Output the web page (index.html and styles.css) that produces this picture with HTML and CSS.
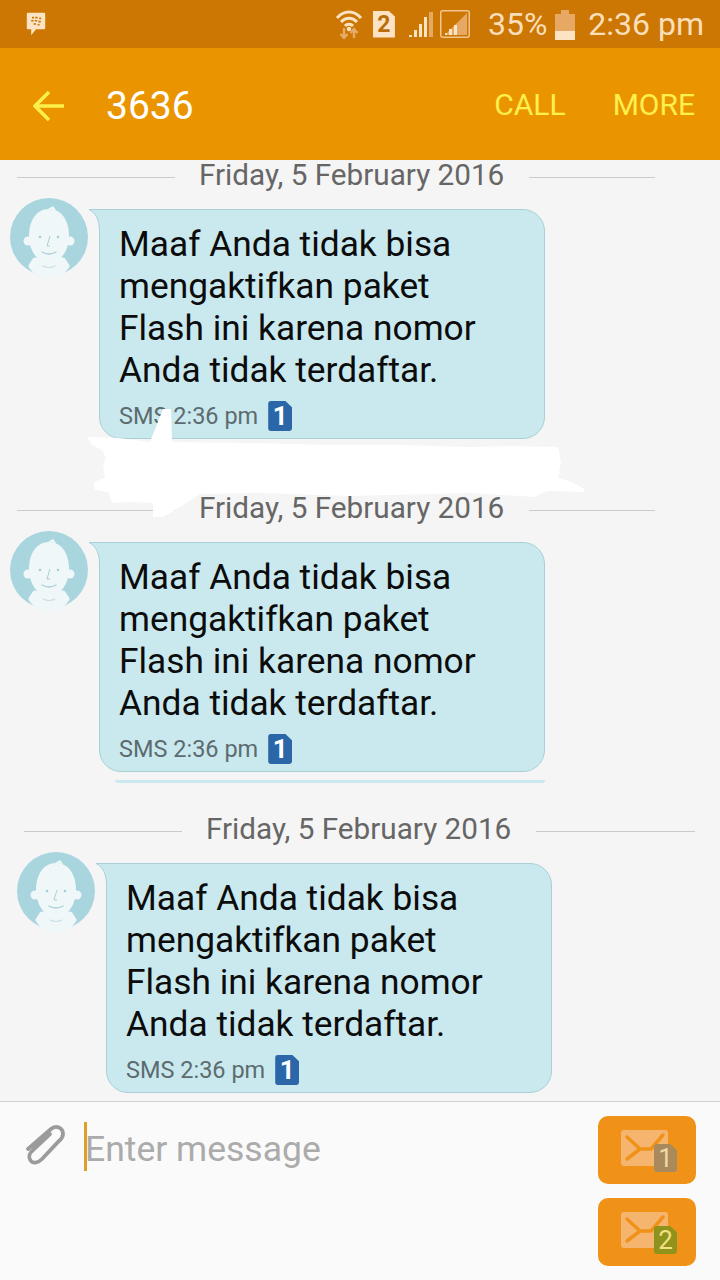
FILE: index.html
```html
<!DOCTYPE html>
<html lang="en">
<head>
<meta charset="utf-8">
<title>3636</title>
<link rel="stylesheet" href="styles.css">
</head>
<body>
<svg class="defs" width="0" height="0" aria-hidden="true">
  <defs>
    <symbol id="avatar" viewBox="0 0 78 80">
      <circle cx="39" cy="39" r="39" fill="#a9d5df"/>
      <path d="M25 62 L21 68 Q39 92 57 68 L53 62Z" fill="#f0f7f9" stroke="#f0f7f9" stroke-width="5" stroke-linejoin="round"/>
      <circle cx="18" cy="43" r="4.500" fill="#f0f7f9"/>
      <circle cx="60" cy="43" r="4.500" fill="#f0f7f9"/>
      <path d="M39 11 C27 11 19 22 19 38 C19 53 28 65 39 65 C50 65 59 53 59 38 C59 22 51 11 39 11Z" fill="#f0f7f9"/>
      <path d="M38 11 L43 8 L46 12Z" fill="#f0f7f9"/>
      <circle cx="30" cy="39" r="1.300" fill="#a9cfd6"/>
      <circle cx="48" cy="39" r="1.300" fill="#a9cfd6"/>
      <path d="M40 38 L37 48 L40 48" fill="none" stroke="#a9cfd6" stroke-width="1"/>
      <path d="M32 54 Q39 58 46 54" fill="none" stroke="#a9cfd6" stroke-width="1.300" stroke-linecap="round"/>
      <path d="M33 68 Q39 71 45 68" fill="none" stroke="#c6e1e6" stroke-width="1.200" stroke-linecap="round"/>
    </symbol>
    <symbol id="tail" viewBox="0 0 12 22">
      <path d="M0 .5 H12 V22 H10.500 C10.500 11 7 4 0 .5Z" fill="#c9e9ef"/>
      <path d="M0 .5 H12 M10.500 22 C10.500 11 7 4 0 .5" fill="none" stroke="#a9d0d6" stroke-width="1"/>
    </symbol>
    <symbol id="envelope" viewBox="0 0 47 36">
      <rect width="47" height="36" rx="3" fill="#f6b56f"/>
      <path d="M6 7 L19 19 L6 29 M19 19 H30 M42 5 L30 19" fill="none" stroke="#f09217" stroke-width="3.500" stroke-linecap="round" stroke-linejoin="round"/>
    </symbol>
  </defs>
</svg>

<div class="phone">
  <header class="status">
    <svg class="bb" viewBox="0 0 24 30" width="24" height="24">
      <path d="M2 1 H22 A1.500 1.500 0 0 1 23.500 2.500 V20 A1.500 1.500 0 0 1 22 21.500 H12 L6 29 V21.500 H2 A1.500 1.500 0 0 1 .5 20 V2.500 A1.500 1.500 0 0 1 2 1Z" fill="#fbe3c3"/>
      <path d="M7 6 h2.500 v2 h-2.500z M11 6 h3 v2 h-3z M16 7 h2.500 v2 h-2.500z M6 10 h3 v2 h-3z M10.500 10 h3 v2 h-3z M15 11 h3 v2 h-3z M9 14 h3 v2 h-3z M14 15 h2.500 v2 h-2.500z" fill="#c9780a"/>
    </svg>
    <div class="status-right">
      <svg class="wifi" viewBox="0 0 28 30" width="28" height="30">
        <path d="M2 9 C9 1 19 1 26 9 M6 13 C11 8 17 8 22 13 M10 17 C12 14.500 16 14.500 18 17" fill="none" stroke="#fbe3c3" stroke-width="3"/>
        <circle cx="14" cy="20" r="2.200" fill="#fbe3c3"/>
        <path d="M9 19 V28 M5.500 25 L9 29 L12.500 25 M19 29 V20 M15.500 24 L19 20 L22.500 24" fill="none" stroke="#e6ab68" stroke-width="2.400"/>
      </svg>
      <div class="sim-status">2</div>
      <svg class="signal" viewBox="0 0 26 26" width="26" height="26">
        <path d="M0 24 h3 v2 h-3z M5 19 h3 v7 h-3z M10 13 h3 v13 h-3z M15 6 h3 v20 h-3z" fill="#fbe3c3"/>
        <path d="M20 1 h4 v25 h-4z" fill="#e6a862"/>
      </svg>
      <svg class="signal-box" viewBox="0 0 30 28" width="30" height="28">
        <rect x=".75" y=".75" width="28.500" height="26.500" rx="2" fill="none" stroke="#f3c48c" stroke-width="1.500"/>
        <path d="M27 3 V25 H5Z" fill="#e6a862"/>
        <path d="M5 25 h2 v-2 h-2z M9 25 h3 v-6 h-3z M14 25 h3 v-10 h-3z" fill="#fbe3c3"/>
      </svg>
      <span class="status-text pct">35%</span>
      <div class="battery"><div class="battery-fill"></div></div>
      <span class="status-text time">2:36 pm</span>
    </div>
  </header>

  <nav class="toolbar">
    <svg class="back" viewBox="0 0 32 32" width="32" height="32">
      <path d="M31 16 H2 M16 2 L2 16 L16 30" fill="none" stroke="#fbf04a" stroke-width="3.500"/>
    </svg>
    <h1 class="title">3636</h1>
    <a class="action call">CALL</a>
    <a class="action">MORE</a>
  </nav>

  <main class="chat">
    <section class="group">
      <div class="date-row">
        <span class="rule rule-left"></span>
        <span class="date">Friday, 5 February 2016</span>
        <span class="rule rule-right"></span>
      </div>
      <div class="msg-row">
        <svg class="avatar"><use href="#avatar"/></svg>
        <article class="bubble">
          <svg class="bubble-tail"><use href="#tail"/></svg>
          <p class="msg-text">Maaf Anda tidak bisa<br>mengaktifkan paket<br>Flash ini karena nomor<br>Anda tidak terdaftar.</p>
          <div class="meta"><span>SMS 2:36 pm</span><span class="sim-tag">1</span></div>
        </article>
      </div>
    </section>

    <section class="group group-second">
      <div class="date-row">
        <span class="rule rule-left"></span>
        <span class="date">Friday, 5 February 2016</span>
        <span class="rule rule-right"></span>
      </div>
      <div class="msg-row">
        <svg class="avatar"><use href="#avatar"/></svg>
        <article class="bubble">
          <svg class="bubble-tail"><use href="#tail"/></svg>
          <p class="msg-text">Maaf Anda tidak bisa<br>mengaktifkan paket<br>Flash ini karena nomor<br>Anda tidak terdaftar.</p>
          <div class="meta"><span>SMS 2:36 pm</span><span class="sim-tag">1</span></div>
        </article>
      </div>
      <div class="sliver"></div>
    </section>

    <section class="group group-third">
      <div class="date-row">
        <span class="rule rule-left"></span>
        <span class="date">Friday, 5 February 2016</span>
        <span class="rule rule-right rule-long"></span>
      </div>
      <div class="msg-row">
        <svg class="avatar"><use href="#avatar"/></svg>
        <article class="bubble">
          <svg class="bubble-tail"><use href="#tail"/></svg>
          <p class="msg-text">Maaf Anda tidak bisa<br>mengaktifkan paket<br>Flash ini karena nomor<br>Anda tidak terdaftar.</p>
          <div class="meta"><span>SMS 2:36 pm</span><span class="sim-tag">1</span></div>
        </article>
      </div>
    </section>
  </main>

  <footer class="composer">
    <svg class="clip" viewBox="0 0 40 44" width="40" height="44">
      <path d="M3 26 L26 6 C31 1.500 38 5 38 11 C38 14 36.500 16 34 18 L17 36 C13 40 8 41 5.500 37.500 C3 34 4.500 30 8 27 L25 11" fill="none" stroke="#9b9b9b" stroke-width="3.800" stroke-linecap="round"/>
    </svg>
    <div class="input"><span class="caret"></span><span class="placeholder">Enter message</span></div>
    <div class="send-col">
      <button class="send">
        <svg class="env"><use href="#envelope"/></svg>
        <span class="send-tag tag-one">1</span>
      </button>
      <button class="send">
        <svg class="env"><use href="#envelope"/></svg>
        <span class="send-tag tag-two">2</span>
      </button>
    </div>
  </footer>

  <svg class="scribble" viewBox="0 0 720 1280" width="720" height="1280" aria-hidden="true">
    <path d="M87 437 L118 438 L150 442 L163 409 L171 409 L172 442 L250 443 L330 445 L400 445 L470 447 L510 446 L558 447 L561 462 L558 478 L572 482 L584 489 L584 492 L548 491 L540 494 L535 497 L470 493 L350 496 L260 493 L200 494 L185 504 L175 510 L163 517 L153 517 L153 503 L130 502 L112 503 L108 492 L95 490 L94 482 L105 478 L103 466 L106 458 L102 450 L92 445Z" fill="#fff"/>
  </svg>
</div>
</body>
</html>
```

FILE: styles.css
```css
* { box-sizing: border-box; }
html, body { margin: 0; padding: 0; }
body { font-family: Roboto, "Liberation Sans", sans-serif; background: #f5f5f5; }
.defs { position: absolute; }

.phone { position: relative; width: 720px; height: 1280px; overflow: hidden; display: flex; flex-direction: column; }

/* status bar */
.status { height: 48px; flex: none; background: #cc7703; display: flex; align-items: center; padding: 0 16px 0 24px; }
.bb { flex: none; }
.status-right { margin-left: auto; display: flex; align-items: center; }
.sim-status { width: 22px; height: 27px; margin-left: 10px; background: #fbe3c3; color: #b96d08; font: 700 23px/27px Roboto, sans-serif; text-align: center; clip-path: polygon(0 0, 70% 0, 100% 22%, 100% 100%, 0 100%); }
.signal { margin-left: 14px; }
.signal-box { margin-left: 5px; }
.status-text { font-size: 32px; line-height: 48px; color: #fbdfba; }
.pct { margin-left: 18px; }
.time { margin-left: 13px; }
.battery { position: relative; width: 20px; height: 26px; margin: 5px 0 0 8px; background: #e6a862; }
.battery::before { content: ""; position: absolute; left: 6px; top: -4px; width: 8px; height: 4px; background: #e6a862; }
.battery-fill { position: absolute; left: 0; right: 0; bottom: 0; height: 9px; background: #fbe3c3; }

/* toolbar */
.toolbar { height: 112px; flex: none; background: #ea9500; display: flex; align-items: center; padding: 0 25px 0 33px; }
.back { flex: none; margin-top: 4px; }
.title { margin: 4px 0 0 41px; font-size: 39px; font-weight: 400; color: #fff; }
.action { font-size: 30px; color: #fdf04d; }
.call { margin-left: auto; margin-right: 47px; }

/* chat */
.chat { flex: 1; background: #f5f5f5; }
.group { padding-left: 10px; }
.group-second { margin-top: 54px; }
.group-third { margin-top: 31px; padding-left: 17px; }
.date-row { height: 30px; display: flex; align-items: center; gap: 25px; padding-left: 7px; }
.rule { height: 1px; background: #c9cccc; margin-top: 5px; }
.rule-left { width: 158px; }
.rule-right { width: 126px; }
.rule-long { width: 159px; }
.date { font-size: 29.700px; line-height: 30px; color: #666; white-space: nowrap; margin-left: -1px; }
.msg-row { display: flex; align-items: flex-start; margin-top: 8px; }
.avatar { width: 78px; height: 80px; flex: none; }
.bubble { position: relative; width: 446px; height: 230px; margin: 11px 0 0 11px; padding: 13px 19px 0; background: #c9e9ef; border: 1px solid #a9d0d6; border-radius: 0 22px 22px 22px; }
.bubble-tail { position: absolute; left: -11px; top: -1px; width: 12px; height: 22px; }
.msg-text { margin: 0; font-size: 35.300px; line-height: 42px; color: #0c0c0c; white-space: nowrap; }
.meta { display: flex; align-items: center; gap: 10px; margin-top: 10px; font-size: 23.500px; color: #5d6b6f; }
.sim-tag { width: 24px; height: 30px; background: #2b67a8; color: #fff; font-weight: 700; font-size: 26px; line-height: 30px; text-align: center; border-radius: 3px; clip-path: polygon(0 0, 72% 0, 100% 22%, 100% 100%, 0 100%); }
.sliver { width: 430px; height: 3px; margin: 8px 0 0 105px; background: #c9e9ef; border-radius: 0 0 6px 6px; }

/* composer */
.composer { flex: none; height: 179px; background: #fafafa; border-top: 1px solid #d5d0d0; display: flex; align-items: flex-start; padding: 14px 24px 0 25px; }
.clip { flex: none; margin-top: 7px; }
.input { display: flex; align-items: flex-start; margin-left: 19px; }
.caret { width: 3px; height: 49px; margin-top: 6px; background: #dca02c; }
.placeholder { font-size: 35.500px; line-height: 48px; margin-top: 9px; margin-left: -2px; color: #ababab; }
.send-col { margin-left: auto; display: flex; flex-direction: column; gap: 14px; }
.send { position: relative; width: 98px; height: 68px; padding: 0; border: 0; border-radius: 10px; background: #f09217; display: block; }
.env { position: absolute; left: 23px; top: 14px; width: 47px; height: 36px; }
.send-tag { position: absolute; left: 56px; top: 28px; width: 23px; height: 28px; font-family: Roboto, sans-serif; font-size: 26px; line-height: 29px; text-align: center; border-radius: 3px; clip-path: polygon(0 0, 70% 0, 100% 22%, 100% 100%, 0 100%); }
.tag-one { background: #a98a5c; color: #f0d9a8; }
.tag-two { background: #8f931c; color: #f2e184; }

/* redaction painted over the screenshot */
.scribble { position: absolute; left: 0; top: 0; pointer-events: none; }
```
